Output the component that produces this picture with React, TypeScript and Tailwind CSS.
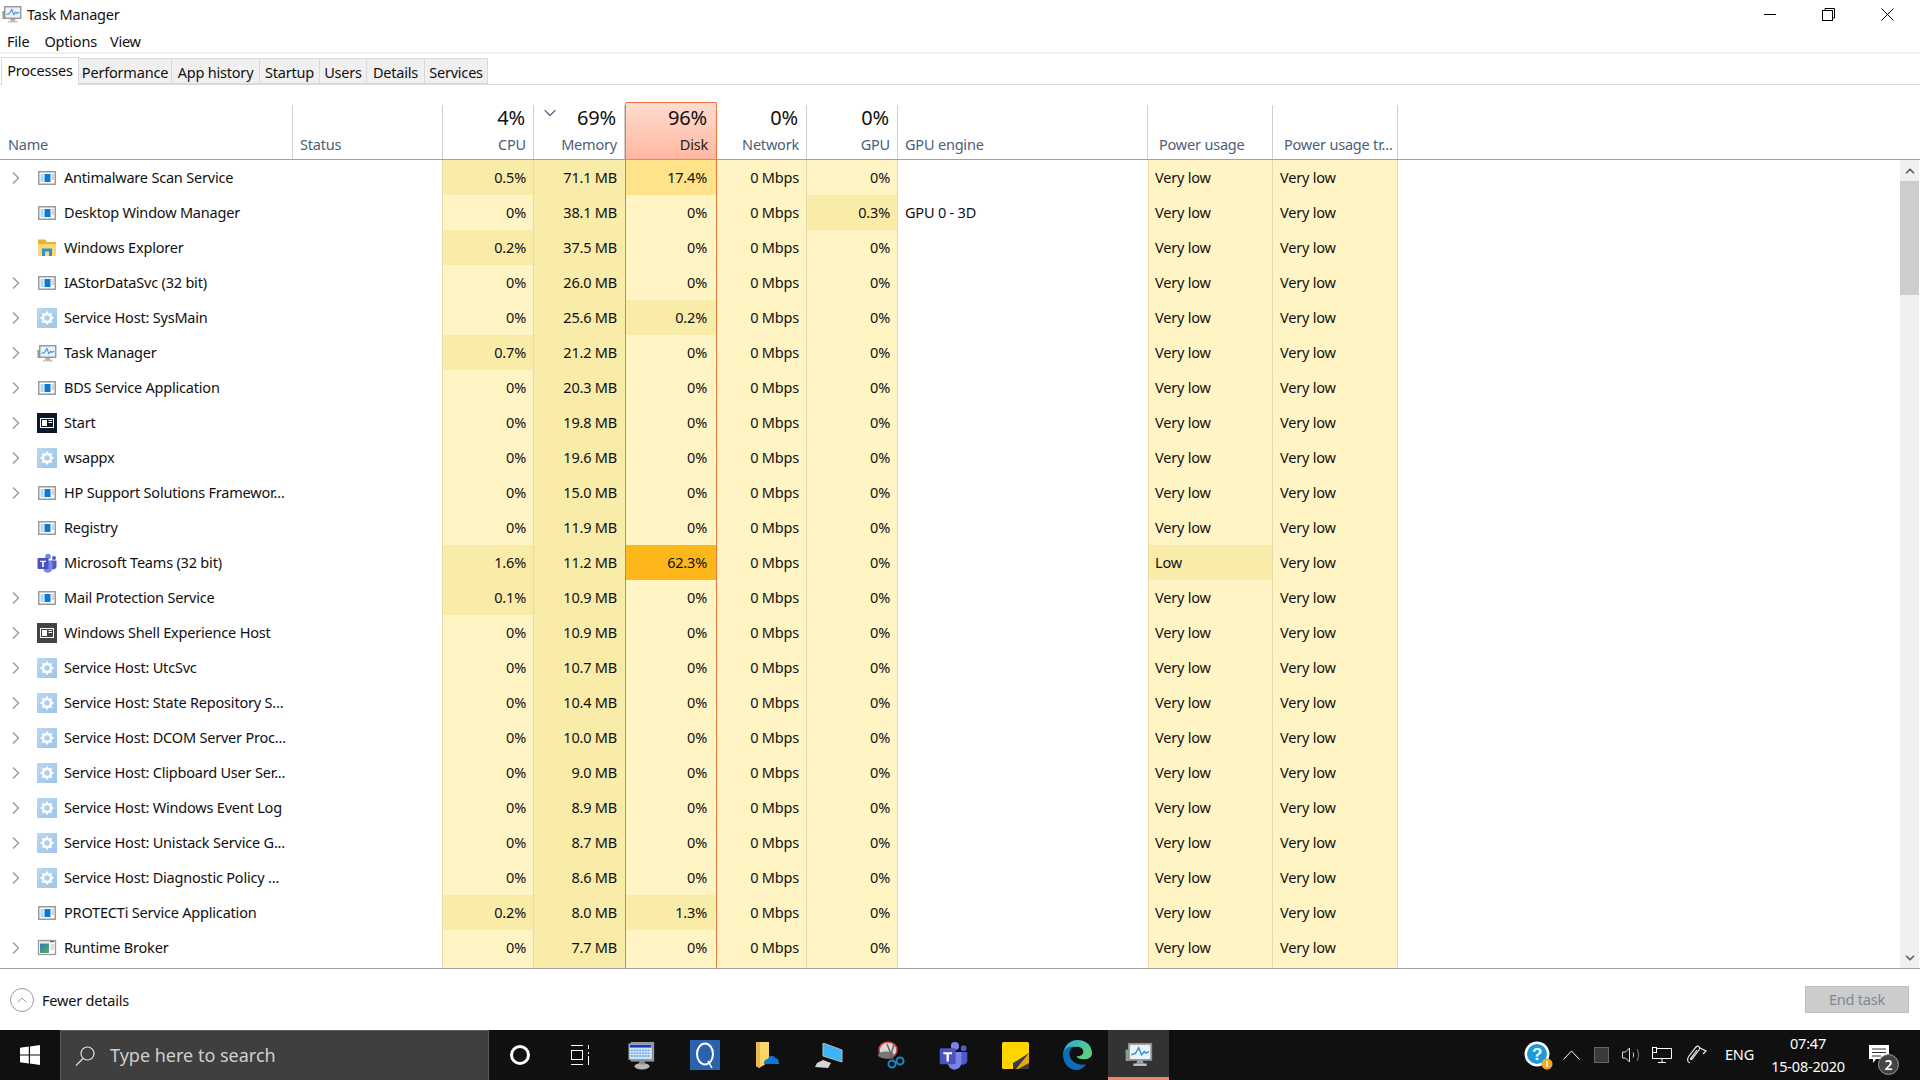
import { ChevronDown, ChevronRight, ChevronUp } from "lucide-react";

const font = "font-['Noto_Sans','Open_Sans',sans-serif]";

type Proc = {
  name: string;
  icon: string;
  expand?: boolean;
  cpu?: string;
  mem: string;
  disk?: string;
  gpu?: string;
  engine?: string;
  power?: string;
  blank?: boolean;
};

const rows: Proc[] = [
  { name: "Antimalware Scan Service", icon: "app", expand: true, cpu: "0.5%", mem: "71.1 MB", disk: "17.4%" },
  { name: "Desktop Window Manager", icon: "app", mem: "38.1 MB", gpu: "0.3%", engine: "GPU 0 - 3D" },
  { name: "Windows Explorer", icon: "folder", cpu: "0.2%", mem: "37.5 MB" },
  { name: "IAStorDataSvc (32 bit)", icon: "app", expand: true, mem: "26.0 MB" },
  { name: "Service Host: SysMain", icon: "gear", expand: true, mem: "25.6 MB", disk: "0.2%" },
  { name: "Task Manager", icon: "tm", expand: true, cpu: "0.7%", mem: "21.2 MB" },
  { name: "BDS Service Application", icon: "app", expand: true, mem: "20.3 MB" },
  { name: "Start", icon: "start", expand: true, mem: "19.8 MB" },
  { name: "wsappx", icon: "gear", expand: true, mem: "19.6 MB" },
  { name: "HP Support Solutions Framewor...", icon: "app", expand: true, mem: "15.0 MB" },
  { name: "Registry", icon: "app", mem: "11.9 MB" },
  { name: "Microsoft Teams (32 bit)", icon: "teams", cpu: "1.6%", mem: "11.2 MB", disk: "62.3%", power: "Low" },
  { name: "Mail Protection Service", icon: "app", expand: true, cpu: "0.1%", mem: "10.9 MB" },
  { name: "Windows Shell Experience Host", icon: "shell", expand: true, mem: "10.9 MB" },
  { name: "Service Host: UtcSvc", icon: "gear", expand: true, mem: "10.7 MB" },
  { name: "Service Host: State Repository S...", icon: "gear", expand: true, mem: "10.4 MB" },
  { name: "Service Host: DCOM Server Proc...", icon: "gear", expand: true, mem: "10.0 MB" },
  { name: "Service Host: Clipboard User Ser...", icon: "gear", expand: true, mem: "9.0 MB" },
  { name: "Service Host: Windows Event Log", icon: "gear", expand: true, mem: "8.9 MB" },
  { name: "Service Host: Unistack Service G...", icon: "gear", expand: true, mem: "8.7 MB" },
  { name: "Service Host: Diagnostic Policy ...", icon: "gear", expand: true, mem: "8.6 MB" },
  { name: "PROTECTi Service Application", icon: "app", cpu: "0.2%", mem: "8.0 MB", disk: "1.3%" },
  { name: "Runtime Broker", icon: "broker", expand: true, mem: "7.7 MB" },
];

const gridCols = "grid grid-cols-[293px_150px_91px_91px_92px_90px_91px_250px_125px_125px]";

function AppIcon() {
  return (
    <svg width="20" height="20" viewBox="0 0 20 20">
      <rect x="1.75" y="3.75" width="16.5" height="12.5" fill="#fff" stroke="#9a9a9a" strokeWidth="1.5" />
      <rect x="7.5" y="6" width="6" height="8" fill="#0a78d7" />
      <rect x="3.5" y="6.5" width="3" height="1" fill="#6bb0e8" />
      <rect x="3.5" y="8.5" width="3" height="1" fill="#6bb0e8" />
      <rect x="3.5" y="10.5" width="3" height="1" fill="#6bb0e8" />
      <rect x="3.5" y="12.5" width="3" height="1" fill="#6bb0e8" />
      <rect x="14.5" y="6.5" width="2.5" height="1" fill="#aaa" />
      <rect x="14.5" y="8.5" width="2.5" height="1" fill="#aaa" />
      <rect x="14.5" y="10.5" width="2.5" height="1" fill="#aaa" />
    </svg>
  );
}

function GearIcon() {
  return (
    <svg width="20" height="20" viewBox="0 0 20 20">
      <defs>
        <linearGradient id="gearbg" x1="0" y1="0" x2="1" y2="1">
          <stop offset="0" stopColor="#b8d8f4" />
          <stop offset="1" stopColor="#9fc4e8" />
        </linearGradient>
      </defs>
      <rect width="20" height="20" fill="url(#gearbg)" />
      <circle cx="10" cy="10" r="4" fill="none" stroke="#fff" strokeWidth="2.4" />
      <path d="M10 3.5v3M10 13.5v3M3.5 10h3M13.5 10h3M5.4 5.4l2 2M12.6 12.6l2 2M14.6 5.4l-2 2M7.4 12.6l-2 2" stroke="#fff" strokeWidth="2" />
    </svg>
  );
}

function FolderIcon() {
  return (
    <svg width="20" height="20" viewBox="0 0 20 20">
      <path d="M1 1.5h7l2 2.5h9v14H1z" fill="#e8b23a" />
      <rect x="1" y="6" width="18" height="12" fill="#fcd873" />
      <path d="M5 18v-7.5h10V18h-3v-4.5H8V18z" fill="#2f8fdc" />
    </svg>
  );
}

function TaskMgrIcon({ size = 20 }: { size?: number }) {
  return (
    <svg width={size} height={size} viewBox="0 0 20 20">
      <rect x="0.5" y="7" width="2.5" height="8" fill="#8fa08f" />
      <rect x="0.5" y="7" width="2.5" height="2" fill="#5fbf6a" />
      <rect x="2.75" y="2.75" width="16" height="11.5" fill="#eaf3fa" stroke="#8f8f8f" strokeWidth="1.3" />
      <path d="M4.5 10.5l3-1 2.3-4 2 5 2-2.2 1.2 1 2.2-1" fill="none" stroke="#3f93d8" strokeWidth="1.1" />
      <path d="M9 14.5h3.5l1 2.3H8z" fill="#a0a0a0" />
      <rect x="6" y="16.8" width="9.5" height="1.7" fill="#c4c4c4" />
    </svg>
  );
}

function TileIcon({ bg }: { bg: string }) {
  return (
    <svg width="20" height="20" viewBox="0 0 20 20">
      <rect width="20" height="20" fill={bg} />
      <rect x="3.5" y="5.5" width="13" height="9" fill="none" stroke="#fff" />
      <rect x="5" y="7" width="5" height="6" fill="#fff" />
      <rect x="11.5" y="7" width="3.5" height="1" fill="#fff" />
      <rect x="11.5" y="9" width="3.5" height="1" fill="#fff" />
    </svg>
  );
}

function TeamsIcon({ size = 20 }: { size?: number }) {
  return (
    <svg width={size} height={size} viewBox="0 0 20 20">
      <circle cx="11" cy="3.5" r="2.8" fill="#7b83eb" />
      <circle cx="17" cy="5" r="2" fill="#5059c9" />
      <path d="M14 7.5h5.5v6a3 3 0 0 1-5.5 1.5z" fill="#5059c9" />
      <path d="M6 7.5h9.5v7.5a4.7 4.7 0 0 1-9.5 0z" fill="#7b83eb" />
      <rect x="0.5" y="5" width="11" height="11" rx="1" fill="#4b53bc" />
      <path d="M3 7.7h6v1.4H6.8v5H5.2v-5H3z" fill="#fff" />
    </svg>
  );
}

function BrokerIcon() {
  return (
    <svg width="20" height="20" viewBox="0 0 20 20">
      <defs>
        <linearGradient id="brokerbg" x1="0" y1="0" x2="1" y2="1">
          <stop offset="0" stopColor="#2f78b8" />
          <stop offset="1" stopColor="#58b06c" />
        </linearGradient>
      </defs>
      <rect x="1.5" y="2.5" width="17" height="14" fill="#fff" stroke="#9a9a9a" strokeWidth="1.3" />
      <rect x="2.5" y="3" width="15" height="1.5" fill="#dcdcdc" />
      <rect x="13" y="3" width="4" height="1.2" fill="#666" />
      <rect x="3" y="5.5" width="9" height="9.5" fill="url(#brokerbg)" />
      <rect x="13.5" y="6.5" width="3.5" height="1" fill="#bbb" />
      <rect x="13.5" y="8.5" width="3.5" height="1" fill="#bbb" />
      <rect x="13.5" y="10.5" width="3.5" height="1" fill="#bbb" />
    </svg>
  );
}

function ProcIcon({ kind }: { kind: string }) {
  if (kind === "gear") return <GearIcon />;
  if (kind === "folder") return <FolderIcon />;
  if (kind === "tm") return <TaskMgrIcon />;
  if (kind === "start") return <TileIcon bg="#0b1a2b" />;
  if (kind === "shell") return <TileIcon bg="#444444" />;
  if (kind === "teams") return <TeamsIcon />;
  if (kind === "broker") return <BrokerIcon />;
  if (kind === "none") return null;
  return <AppIcon />;
}

function heat(v?: string) {
  if (!v) return "bg-[#fff4c4]";
  const n = parseFloat(v);
  if (n >= 50) return "bg-[#fdb71a]";
  if (n >= 10) return "bg-[#ffe38a]";
  return "bg-[#f9eba8]";
}

function NumCell({ value, bg, pad = "pr-[7px]", className = "" }: { value: string; bg: string; pad?: string; className?: string }) {
  return (
    <div className={`flex items-center justify-end ${pad} ${bg} ${className}`}>
      {value}
    </div>
  );
}

function Row({ p }: { p: Proc }) {
  return (
    <div className={`${gridCols} h-[35px] shrink-0 text-[#111]`}>
      <div className="flex items-center pl-[6px]">
        <span className="w-[31px] shrink-0 text-[#a0a0a0]">
          {p.expand && <ChevronRight size={20} strokeWidth={2} />}
        </span>
        <span className="w-[27px] shrink-0 flex"><ProcIcon kind={p.icon} /></span>
        <span className="whitespace-nowrap">{p.name}</span>
      </div>
      <div className="border-r border-[#ead9a6]" />
      <NumCell value={p.blank ? "" : p.cpu ?? "0%"} bg={heat(p.cpu)} className="border-r border-[#ead9a6]" />
      <NumCell value={p.mem} bg="bg-[#f9eba8]" pad="pr-[8px]" />
      <NumCell value={p.blank ? "" : p.disk ?? "0%"} bg={heat(p.disk)} pad="pr-[9px]" className="border-x border-[#f0763c]" />
      <NumCell value={p.blank ? "" : "0 Mbps"} bg="bg-[#fff4c4]" className="border-r border-[#ead9a6]" />
      <NumCell value={p.blank ? "" : p.gpu ?? "0%"} bg={heat(p.gpu)} className="border-r border-[#ead9a6]" />
      <div className="flex items-center pl-[7px]">{p.engine}</div>
      <div className={`flex items-center pl-[6px] border-x border-[#ead9a6] ${p.power ? "bg-[#f9eba8]" : "bg-[#fff4c4]"}`}>
        {p.blank ? "" : p.power ?? "Very low"}
      </div>
      <div className="flex items-center pl-[7px] border-r border-[#ead9a6] bg-[#fff4c4]">{p.blank ? "" : "Very low"}</div>
    </div>
  );
}

function HeadCell({ pct, label, sorted, hot }: { pct: string; label: string; sorted?: boolean; hot?: boolean }) {
  return (
    <div
      className={`relative flex flex-col items-end ${
        hot
          ? "pr-[8px] -mt-[3px] rounded-t-[2px] border-x border-t border-[#f0763c] bg-gradient-to-b from-[#ffdccf] to-[#ffb7a0] text-[#222]"
          : "pr-[7px] border-r border-[#cfcfcf] text-[#4c607a]"
      }`}
    >
      {sorted && (
        <ChevronDown size={20} strokeWidth={1.3} className="absolute left-[6px] -top-[2px] text-[#4c607a]" />
      )}
      <span className={`${hot ? "mt-[3px]" : "mt-[1px]"} pr-px text-[20px] leading-[24px] text-[#111]`}>{pct}</span>
      <span className="mt-[4px] leading-[20px]">{label}</span>
    </div>
  );
}

function TextHead({ label, pad = "pl-[7px]" }: { label: string; pad?: string }) {
  return (
    <div className={`flex items-end pb-[5px] border-r border-[#cfcfcf] leading-[20px] text-[#4c607a] ${pad}`}>
      <span className="whitespace-nowrap">{label}</span>
    </div>
  );
}

function Tab({ label, width, active }: { label: string; width: string; active?: boolean }) {
  return (
    <div
      className={
        active
          ? `${width} -mb-px h-[28px] -mt-[2px] flex justify-center pt-[1px] bg-white border border-b-0 border-[#d9d9d9] leading-[22px]`
          : `${width} h-[26px] flex justify-center items-center pt-[2px] bg-[#f0f0f0] border border-l-0 border-[#d9d9d9] leading-[22px]`
      }
    >
      {label}
    </div>
  );
}

function Taskbar() {
  return (
    <div className="h-[50px] shrink-0 bg-[#101010] flex items-center text-white">
      <div className="w-[60px] flex justify-center">
        <svg width="20" height="20" viewBox="0 0 20 20">
          <path d="M0 2.8L8.8 1.6v7.9H0zM10 1.4L20 0v9.5H10zM0 10.6h8.8v7.8L0 17.2zM10 10.6h10V20l-10-1.4z" fill="#fff" />
        </svg>
      </div>
      <div className="w-[429px] h-full bg-[#3f3f3f] border border-b-0 border-[#5a5a5a] flex items-center pl-[14px]">
        <svg width="20" height="20" viewBox="0 0 20 20" fill="none" stroke="#e0e0e0" strokeWidth="1.2">
          <circle cx="12.5" cy="7.5" r="6.5" />
          <path d="M8 12.5L1 19.5" />
        </svg>
        <span className="ml-[15px] text-[18px] tracking-normal text-[#cfcfcf]">Type here to search</span>
      </div>
      <div className="w-[61px] flex justify-center">
        <div className="w-[20px] h-[20px] rounded-full border-[3px] border-white" />
      </div>
      <div className="w-[60px] flex justify-center">
        <svg width="20" height="20" viewBox="0 0 20 20" fill="none" stroke="#fff" strokeWidth="1">
          <path d="M1 .5h12M1 19.5h12" />
          <rect x="1.5" y="5.5" width="11" height="9" />
          <path d="M18.5 0v4M18.5 7v2M18.5 11v9" />
        </svg>
      </div>
      <div className="flex items-center h-full">
        <div className="w-[63px] flex justify-center">
          <svg width="28" height="29" viewBox="0 0 30 31">
            <rect x="3" y="1" width="25" height="21" fill="#9b9b9b" />
            <rect x="1" y="3" width="25" height="17" fill="#cfe3f7" stroke="#888" />
            <rect x="2" y="4" width="23" height="3" fill="#1c38b5" />
            <path d="M3 10h20M3 13h20M3 16h20" stroke="#5a9be0" strokeWidth="1.5" strokeDasharray="2 1" />
            <ellipse cx="15" cy="27" rx="8" ry="3.5" fill="#b9b9b9" />
            <rect x="12" y="20" width="6" height="5" fill="#8f8f8f" />
          </svg>
        </div>
        <div className="w-[63px] flex justify-center">
          <svg width="30" height="30" viewBox="0 0 30 30">
            <rect width="30" height="30" fill="#2a62ad" />
            <ellipse cx="15" cy="14" rx="8" ry="10.5" fill="none" stroke="#fff" strokeWidth="2" />
            <path d="M18 21l4 7" stroke="#fff" strokeWidth="1.5" />
          </svg>
        </div>
        <div className="w-[62px] flex justify-center">
          <svg width="23" height="26" viewBox="0 0 23 26">
            <path d="M0 0h13v20l-10 6-3-2z" fill="#fbd56c" />
            <path d="M0 0h4v26l-4-2z" fill="#e9b949" />
            <path d="M8 22c0-4 2-5 4-5 1-4 6-4 7-1 3 0 4 3 4 6z" fill="#0f78d4" />
          </svg>
        </div>
        <div className="w-[62px] flex justify-center">
          <svg width="28" height="25" viewBox="0 0 28 25">
            <path d="M8 0l19 7v12L8 13z" fill="#3db4fa" stroke="#bbb" />
            <path d="M8 17l8 3-3 5-13-1 2-4z" fill="#d6d6d6" />
          </svg>
        </div>
        <div className="w-[62px] flex justify-center">
          <svg width="28" height="28" viewBox="0 0 28 28" fill="none">
            <ellipse cx="11" cy="9" rx="9" ry="8" fill="#d9d9d9" stroke="#d23c3c" strokeWidth="1.5" />
            <ellipse cx="9" cy="14" rx="8" ry="3.5" fill="#777" />
            <path d="M10 3l6 15M17 3l-4 15" stroke="#666" strokeWidth="1.5" />
            <circle cx="15" cy="23" r="3.5" stroke="#1588c9" strokeWidth="2" />
            <circle cx="23" cy="20" r="3.5" stroke="#1588c9" strokeWidth="2" />
          </svg>
        </div>
        <div className="w-[62px] flex justify-center"><TeamsIcon size={29} /></div>
        <div className="w-[62px] flex justify-center">
          <svg width="27" height="27" viewBox="0 0 27 27">
            <rect width="27" height="27" rx="1.5" fill="#ffd500" />
            <path d="M27 11v16H11V21z" fill="#3a3a3a" />
            <path d="M27 11v10L16 27h-2z" fill="#e7a90f" />
          </svg>
        </div>
        <div className="w-[62px] flex justify-center">
          <svg width="31" height="30" viewBox="0 0 32 31">
            <defs>
              <linearGradient id="edgeg" x1="0" y1="0" x2="1" y2="0.6">
                <stop offset="0" stopColor="#2ba9d8" />
                <stop offset="1" stopColor="#5fd17d" />
              </linearGradient>
            </defs>
            <path d="M16 0c9 0 15 6 15 14 0 4-4 6-8 6-5 0-8-2-8-3 5 0 7-2 7-5s-3-5-7-5C7 7 2 11 1 15 2 6 8 0 16 0z" fill="url(#edgeg)" />
            <path d="M1 15c0-5 6-9 11-8-3 1-5 4-4 9 1 6 8 11 17 9-3 4-6 6-10 6C7 31 1 24 1 15z" fill="#0f6db8" />
          </svg>
        </div>
        <div className="w-[61px] h-full flex justify-center items-center bg-[#333333] border-b-[3px] border-[#f4846c]">
          <TaskMgrIcon size={28} />
        </div>
      </div>
      <div className="ml-auto flex items-center h-full">
        <svg width="29" height="30" viewBox="0 0 29 30" className="mr-[10px]">
          <circle cx="13" cy="14" r="12.5" fill="#fff" />
          <circle cx="13" cy="14" r="10" fill="#1f9ad6" />
          <text x="13" y="20" fontSize="17" fontWeight="700" fill="#fff" textAnchor="middle" fontFamily="Liberation Sans">?</text>
          <circle cx="23" cy="24" r="5.5" fill="#f5a623" />
          <rect x="22.2" y="21" width="1.6" height="6" fill="#fff" />
        </svg>
        <svg width="17" height="10" viewBox="0 0 17 10" fill="none" stroke="#fff" strokeWidth="1" className="mr-[14px]">
          <path d="M.5 9.5l8-8.5 8 8.5" />
        </svg>
        <div className="w-[15px] h-[16px] bg-[#3a3a3a] border border-[#666] mr-[13px]" />
        <svg width="20" height="16" viewBox="0 0 20 16" fill="none" stroke="#ddd" strokeWidth="1" className="mr-[10px]">
          <path d="M.5 5h3l4-4v14l-4-4h-3z" />
          <path d="M11 5.5c.8 1.5.8 3.5 0 5" />
          <path d="M15 2c2 4 2 8 0 12" stroke="#888" />
        </svg>
        <svg width="20" height="16" viewBox="0 0 20 16" fill="none" stroke="#fff" strokeWidth="1" className="mr-[15px]">
          <path d="M4 1.5h15.5v10H.5V6" />
          <path d="M6 15.5h8M10 11.5v4" />
          <rect x=".5" y=".5" width="4" height="5" />
        </svg>
        <svg width="20" height="20" viewBox="0 0 20 20" fill="none" stroke="#eee" strokeWidth="1.2" className="mr-[18px]">
          <path d="M3 18c-3-1-3-4-1-7l7-9c2-2 5 0 3 3l-7 9c-1 1-2 0-1-1l6-8" />
          <path d="M13 3l6 3-3 3" />
        </svg>
        <span className="w-[29px] mr-[16px] whitespace-nowrap">ENG</span>
        <div className="w-[76px] mr-[23px] flex flex-col items-center leading-[23px]">
          <span>07:47</span>
          <span className="whitespace-nowrap">15-08-2020</span>
        </div>
        <div className="relative w-[51px] h-full flex items-center">
          <svg width="20" height="18" viewBox="0 0 20 18" className="-mt-[2px]">
            <path d="M0 0h20v14H7l-3 4v-4H0z" fill="#fff" />
            <path d="M3 4h14M3 7.5h14M3 11h9" stroke="#333" />
          </svg>
          <span className="absolute left-[9px] top-[24px] w-[21px] h-[21px] rounded-full bg-[#444] border border-[#999] flex items-center justify-center text-[14px] font-semibold leading-none">2</span>
        </div>
      </div>
    </div>
  );
}

export default function App() {
  return (
    <div className={`${font} w-[1920px] h-[1080px] overflow-hidden flex flex-col bg-white text-[14.5px] tracking-[-0.2px] text-[#111]`}>
      <div className="h-[28px] shrink-0 flex items-center pl-[2px]">
        <TaskMgrIcon />
        <span className="ml-[5px] mt-[2px]">Task Manager</span>
        <div className="ml-auto flex items-center pr-[3px]">
          <div className="w-[58px] flex justify-center"><div className="w-[12px] h-px bg-black" /></div>
          <div className="w-[59px] flex justify-center">
            <svg width="13" height="13" viewBox="0 0 13 13" fill="none" stroke="#000">
              <rect x="0.5" y="2.5" width="10" height="10" />
              <path d="M3 2.5V.5h9.5V10h-2" />
            </svg>
          </div>
          <div className="w-[59px] flex justify-center">
            <svg width="13" height="13" viewBox="0 0 13 13" stroke="#000" strokeWidth="1">
              <path d="M.5.5l12 12M12.5.5l-12 12" />
            </svg>
          </div>
        </div>
      </div>
      <div className="h-[24px] shrink-0 flex items-center pt-[3px] pl-[7px]">
        <span className="mr-[15px]">File</span>
        <span className="mr-[13px]">Options</span>
        <span>View</span>
      </div>
      <div className="h-[2px] shrink-0 bg-[#f0f0f0]" />
      <div className="h-[31px] shrink-0 flex items-end pl-px border-b border-[#d9d9d9]">
        <Tab label="Processes" width="w-[78px]" active />
        <Tab label="Performance" width="w-[93px]" />
        <Tab label="App history" width="w-[88px]" />
        <Tab label="Startup" width="w-[60px]" />
        <Tab label="Users" width="w-[47px]" />
        <Tab label="Details" width="w-[58px]" />
        <Tab label="Services" width="w-[63px]" />
      </div>
      <div className="h-[20px] shrink-0" />
      <div className="h-[55px] shrink-0 flex border-b border-[#a0a0a0]">
        <div className={gridCols}>
          <TextHead label="Name" pad="pl-[8px]" />
          <TextHead label="Status" />
          <HeadCell pct="4%" label="CPU" />
          <HeadCell pct="69%" label="Memory" sorted />
          <HeadCell pct="96%" label="Disk" hot />
          <HeadCell pct="0%" label="Network" />
          <HeadCell pct="0%" label="GPU" />
          <TextHead label="GPU engine" />
          <TextHead label="Power usage" pad="pl-[11px]" />
          <TextHead label="Power usage tr..." pad="pl-[11px]" />
        </div>
      </div>
      <div className="flex-1 min-h-0 flex border-b border-[#a0a0a0]">
        <div className="flex-1 min-w-0 flex flex-col overflow-hidden">
          {rows.map((p) => (
            <Row key={p.name} p={p} />
          ))}
          <Row p={{ name: "", icon: "none", mem: "", blank: true }} />
        </div>
        <div className="w-[19px] mr-px shrink-0 bg-[#f0f0f0] flex flex-col">
          <div className="h-[21px] flex items-center justify-center text-[#606060]">
            <ChevronUp size={14} strokeWidth={3} />
          </div>
          <div className="h-[114px] bg-[#cdcdcd]" />
          <div className="mt-auto h-[21px] flex items-center justify-center text-[#606060]">
            <ChevronDown size={14} strokeWidth={3} />
          </div>
        </div>
      </div>
      <div className="h-[61px] shrink-0 flex items-center pl-[10px] pr-[11px]">
        <div className="w-[24px] h-[24px] rounded-full border border-[#9a9a9a] flex items-center justify-center text-[#9a9a9a]">
          <ChevronUp size={16} strokeWidth={1.5} />
        </div>
        <span className="ml-[8px] mt-[2px]">Fewer details</span>
        <div className="ml-auto w-[104px] h-[27px] bg-[#cccccc] border border-[#bfbfbf] flex items-center justify-center text-[#7d8896]">
          End task
        </div>
      </div>
      <Taskbar />
    </div>
  );
}
